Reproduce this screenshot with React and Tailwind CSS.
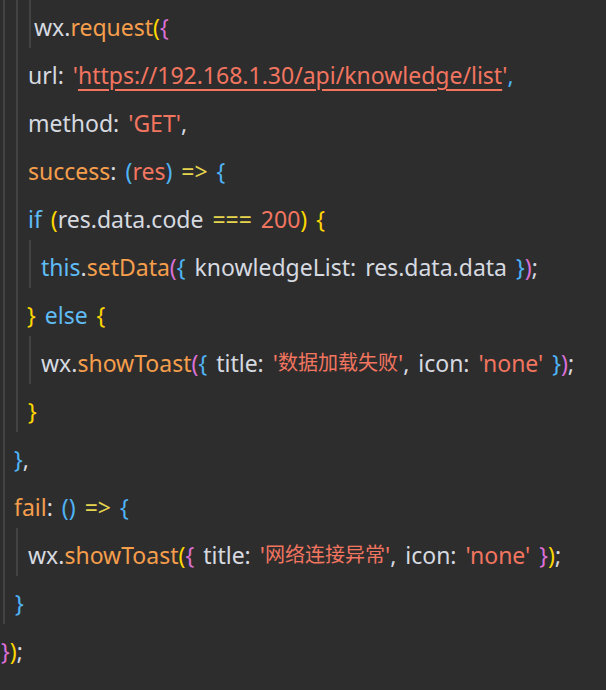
const C = {
  def: "text-[#d6dae0]",
  fn: "text-[#f59e4c]",
  str: "text-[#f27560]",
  kw: "text-[#5fbcf5]",
  op: "text-[#e6d54f]",
  gold: "text-[#ffd700]",
  orchid: "text-[#da70d6]",
  blue: "text-[#4fb3f5]",
};

// indent guides: x positions per line
const lines = [
  { pad: "pl-[34px]", guides: [3, 16, 29], t: [["wx.", "def"], ["request", "fn"], ["(", "gold"], ["{", "orchid"]] },
  {
    pad: "pl-[28px]",
    guides: [3, 16],
    t: [["url: ", "def"], ["'", "str"], ["https://192.168.1.30/api/knowledge/list", "url"], ["'", "str"], [",", "blue"]],
  },
  { pad: "pl-[28px]", guides: [3, 16], t: [["method: ", "def"], ["'GET'", "str"], [",", "def"]] },
  {
    pad: "pl-[28px]",
    guides: [3, 16],
    t: [["success", "fn"], [": ", "def"], ["(", "blue"], ["res", "str"], [")", "blue"], [" => ", "op"], ["{", "blue"]],
  },
  {
    pad: "pl-[28px]",
    guides: [3, 16],
    t: [["if ", "kw"], ["(", "gold"], ["res.data.code ", "def"], ["=== ", "op"], ["200", "str"], [")", "gold"], [" {", "gold"]],
  },
  {
    pad: "pl-[41px]",
    guides: [3, 16, 29],
    t: [
      ["this", "kw"], [".", "def"], ["setData", "fn"], ["(", "orchid"], ["{", "blue"],
      [" knowledgeList: res.data.data ", "def"], ["}", "blue"], [")", "orchid"], [";", "def"],
    ],
  },
  { pad: "pl-[27px]", guides: [3, 16], t: [["}", "gold"], [" else ", "kw"], ["{", "gold"]] },
  {
    pad: "pl-[41px]",
    guides: [3, 16, 29],
    t: [
      ["wx.", "def"], ["showToast", "fn"], ["(", "orchid"], ["{", "blue"], [" title: ", "def"],
      ["'", "str"], ["数据加载失败", "cjk"], ["'", "str"], [", icon: ", "def"], ["'none'", "str"], [" ", "def"],
      ["}", "blue"], [")", "orchid"], [";", "def"],
    ],
  },
  { pad: "pl-[28px]", guides: [3, 16], t: [["}", "gold"]] },
  { pad: "pl-[14px]", guides: [3], t: [["}", "blue"], [",", "def"]] },
  {
    pad: "pl-[14px]",
    guides: [3],
    t: [["fail", "fn"], [": ", "def"], ["()", "blue"], [" => ", "op"], ["{", "blue"]],
  },
  {
    pad: "pl-[28px]",
    guides: [3, 16],
    t: [
      ["wx.", "def"], ["showToast", "fn"], ["(", "gold"], ["{", "orchid"], [" title: ", "def"],
      ["'", "str"], ["网络连接异常", "cjk"], ["'", "str"], [", icon: ", "def"], ["'none'", "str"], [" ", "def"],
      ["}", "orchid"], [")", "gold"], [";", "def"],
    ],
  },
  { pad: "pl-[15px]", guides: [3], t: [["}", "blue"]] },
  { pad: "pl-[1px]", guides: [], t: [["}", "orchid"], [")", "gold"], [";", "def"]] },
];

const guideLeft = {
  3: "left-[3px]",
  16: "left-[16px]",
  29: "left-[29px]",
};

function Token({ text, kind }) {
  if (kind === "url") {
    return (
      <span className="text-[#f27560] underline decoration-[#f27560] decoration-2 underline-offset-[5px]">
        {text}
      </span>
    );
  }
  if (kind === "cjk") {
    return <span className="text-[#f27560] text-[20px]">{text}</span>;
  }
  return <span className={C[kind]}>{text}</span>;
}

export default function App() {
  return (
    <div
      className="w-[606px] h-[690px] bg-[#2d2d2d] overflow-hidden text-[23px] whitespace-pre [word-spacing:3px]"
      style={{ fontFamily: '"Noto Sans", "Noto Sans CJK SC", sans-serif' }}
    >
      {lines.map((line, i) => (
        <div key={i} className={`relative h-[48px] flex items-center pt-[6px] ${line.pad}`}>
          {line.guides.map((g) => (
            <span key={g} className={`absolute top-0 bottom-0 w-[2px] bg-[#434343] ${guideLeft[g]}`} />
          ))}
          {line.t.map(([text, kind], j) => (
            <Token key={j} text={text} kind={kind} />
          ))}
        </div>
      ))}
    </div>
  );
}
